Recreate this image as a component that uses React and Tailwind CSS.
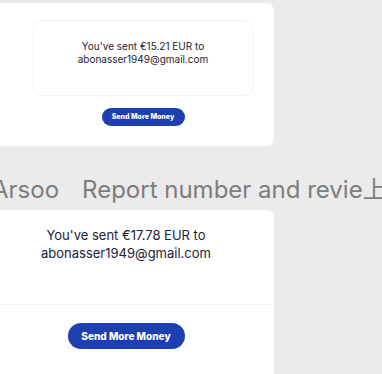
export default function App() {
  return (
    <div className="w-[382px] h-[374px] overflow-hidden bg-[#ebebeb] font-['Inter',sans-serif]">
      {/* small card */}
      <div className="mt-[3px] ml-[-10px] w-[284px] h-[143px] rounded-[8px] bg-white pl-[43px] pr-[21px] pt-[17px]">
        <div className="h-[76px] rounded-[8px] border border-[#f2f2f2] pt-[19px] text-center text-[10px] leading-[13px] text-[#1c2233]">
          <p>You've sent €15.21 EUR to</p>
          <p>abonasser1949@gmail.com</p>
        </div>
        <div className="mt-[12px] flex justify-center">
          <button className="w-[83px] h-[18px] rounded-full bg-[#1c40b2] text-[7px] font-extrabold text-white">
            Send More Money
          </button>
        </div>
      </div>

      {/* caption row */}
      <div className="mt-[27px] ml-[-8px] w-[400px] whitespace-nowrap text-[24px] leading-[30px] text-[#7d7d7d] font-['Inter','Noto_Sans_CJK_SC',sans-serif]">
        Arsoo<span className="ml-[23px]">Report number and revie</span>
        <span className="font-['Noto_Sans_CJK_SC',sans-serif]">上</span>
      </div>

      {/* big card */}
      <div className="mt-[5px] ml-[-22px] w-[296px] h-[180px] rounded-[8px] bg-white">
        <div className="h-[95px] border-b border-[#f3f3f3] pt-[16px] text-center text-[13px] leading-[18px] text-[#1c2233]">
          <p>You've sent €17.78 EUR to</p>
          <p>abonasser1949@gmail.com</p>
        </div>
        <div className="pt-[18px] flex justify-center">
          <button className="w-[117px] h-[26px] rounded-full bg-[#1c40b2] text-[10px] font-extrabold text-white">
            Send More Money
          </button>
        </div>
      </div>
    </div>
  );
}
